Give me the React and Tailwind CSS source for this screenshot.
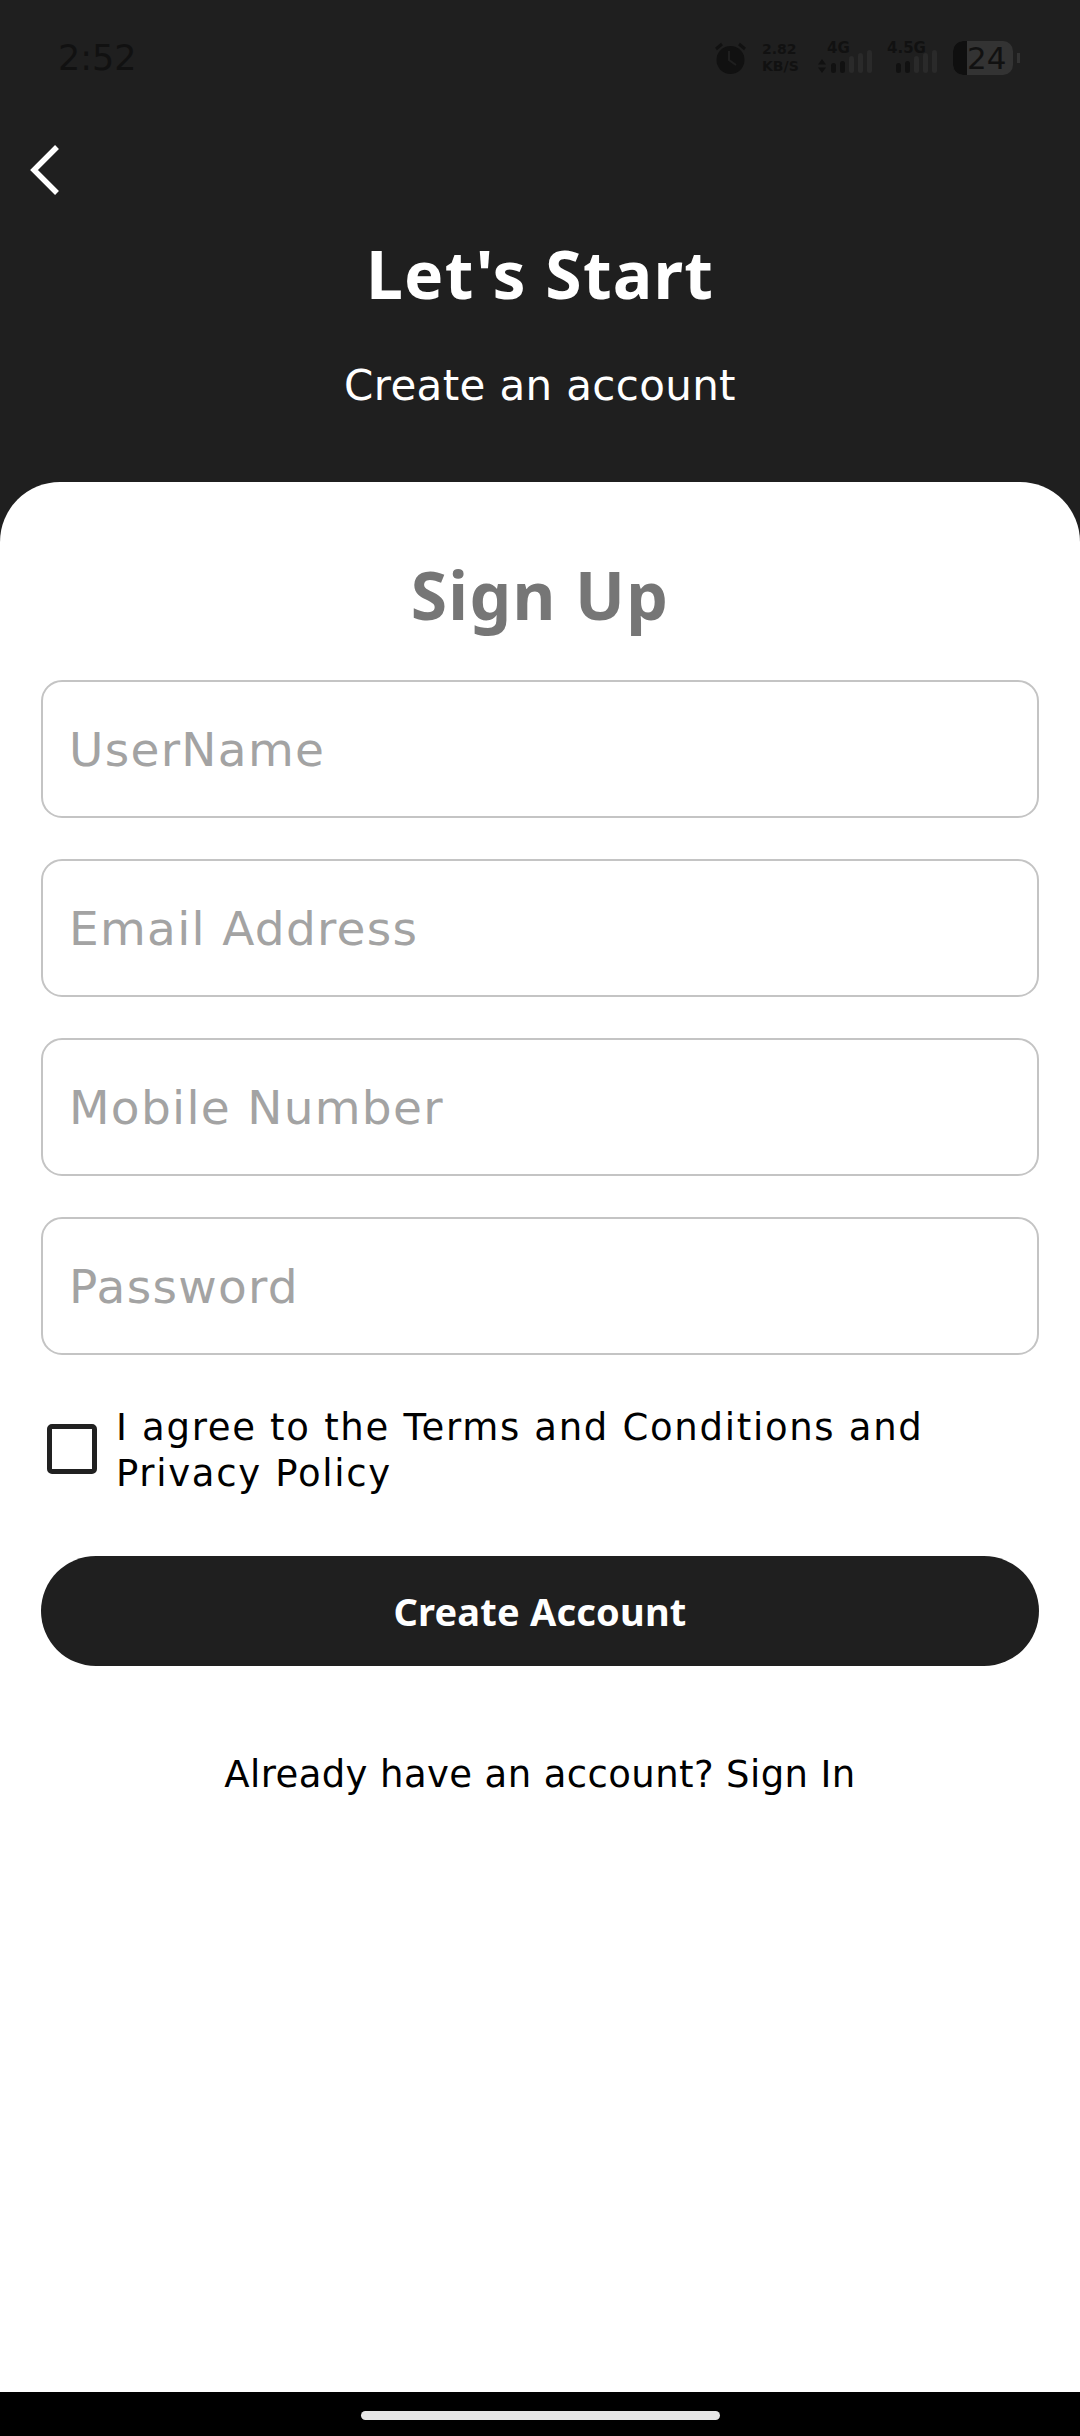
import React from "react";

const BARS = [10, 12, 17, 20, 23];

const Signal = ({ label, arrows }) => (
  <div className={arrows ? "relative w-[54px] h-[34px]" : "relative w-[50px] h-[34px]"}>
    <span
      className={
        arrows
          ? "absolute top-[0px] left-[9px] text-[15px] leading-[15px] font-bold whitespace-nowrap"
          : "absolute top-[0px] left-[0px] text-[15px] leading-[15px] font-bold whitespace-nowrap"
      }
    >
      {label}
    </span>
    {arrows && (
      <svg width="8" height="14" viewBox="0 0 8 14" className="absolute left-0 bottom-[2px]">
        <path d="M4 0l4 5.5H0zM4 14L0 8.5h8z" fill="#111111" />
      </svg>
    )}
    <div className="absolute bottom-[2px] right-0 flex items-end gap-[4px]">
      {BARS.map((h, i) => (
        <div
          key={i}
          className={i < 2 ? "w-[5px] rounded-full bg-[#111111]" : "w-[5px] rounded-full bg-[#2a2a2a]"}
          style={{ height: h }}
        />
      ))}
    </div>
  </div>
);

const StatusBar = () => (
  <div className="flex items-center justify-between h-[116px] pl-[58px] pr-[60px] text-[#111111]">
    <span className="text-[35px] leading-none">2:52</span>
    <div className="flex items-center h-[34px]">
      <svg width="31" height="32" viewBox="0 0 31 32" className="mr-[16px]">
        <circle cx="15.5" cy="18" r="14" fill="#111111" />
        <path d="M14 9v9l7 5" fill="none" stroke="#1f1f1f" strokeWidth="2" />
        <path d="M1 7l6-5M30 7l-6-5" stroke="#111111" strokeWidth="3" />
      </svg>
      <div className="flex flex-col items-start w-[56px] text-[14px] leading-[17px] font-bold">
        <span>2.82</span>
        <span>KB/S</span>
      </div>
      <Signal label="4G" arrows />
      <div className="w-[15px]" />
      <Signal label="4.5G" />
      <div className="flex items-center ml-[16px]">
        <div className="relative flex w-[60px] h-[34px] rounded-[10px] overflow-hidden bg-[#333333]">
          <div className="w-[14px] bg-[#0f0f0f]" />
          <span className="absolute left-[14px] top-[1px] text-[31px] leading-[32px] text-[#111111]">24</span>
        </div>
        <div className="ml-[4px] w-[3px] h-[10px] bg-[#333333]" />
      </div>
    </div>
  </div>
);

const Field = ({ placeholder }) => (
  <input
    type="text"
    placeholder={placeholder}
    className="w-full h-[138px] pl-[26px] pr-[27px] rounded-[21px] border-2 border-[#c4c4c4] bg-white text-[47px] tracking-[1.3px] placeholder:text-[#a3a3a3] outline-none"
  />
);

export default function App() {
  return (
    <div className="flex flex-col w-[1080px] h-[2436px] bg-[#1f1f1f] overflow-hidden font-['DejaVu_Sans',sans-serif]">
      <StatusBar />
      <div className="h-[366px] flex flex-col items-center relative">
        <svg width="32" height="52" viewBox="0 0 32 52" className="absolute left-[29px] top-[28px]">
          <path d="M28 3L5 26l23 23" fill="none" stroke="#ffffff" strokeWidth="5.5" />
        </svg>
        <h1 className="mt-[119px] text-[66px] leading-[76px] tracking-[1.2px] font-bold text-white font-['Noto_Sans',sans-serif]">
          Let's Start
        </h1>
        <p className="mt-[50px] text-[42px] leading-[50px] tracking-[0.35px] text-white">Create an account</p>
      </div>
      <div className="flex-1 flex flex-col items-center bg-white rounded-t-[60px] px-[41px]">
        <h2 className="mt-[74px] text-[66px] leading-[76px] tracking-[1.3px] font-bold text-[#767676] font-['Noto_Sans',sans-serif]">
          Sign Up
        </h2>
        <div className="mt-[48px] flex flex-col gap-[41px] w-full">
          <Field placeholder="UserName" />
          <Field placeholder="Email Address" />
          <Field placeholder="Mobile Number" />
          <Field placeholder="Password" />
        </div>
        <div className="mt-[48px] flex items-center w-full pl-[6px]">
          <div className="w-[50px] h-[50px] shrink-0 rounded-[5px] border-[5px] border-[#212121] bg-white" />
          <p className="ml-[19px] pt-[2px] -mb-[2px] text-[37px] leading-[46px] tracking-[1.7px] text-black">
            I agree to the Terms and Conditions and Privacy Policy
          </p>
        </div>
        <button className="mt-[61px] w-full h-[110px] rounded-full bg-[#1f1f1f] text-white text-[38px] tracking-[0.2px] font-bold font-['Noto_Sans',sans-serif]">
          Create Account
        </button>
        <p className="mt-[86px] text-[37px] leading-[46px] tracking-[0.4px] text-black">
          Already have an account? Sign In
        </p>
      </div>
      <div className="h-[44px] bg-black flex justify-center pt-[19px]">
        <div className="w-[359px] h-[9px] rounded-full bg-[#e6e6e6]" />
      </div>
    </div>
  );
}
